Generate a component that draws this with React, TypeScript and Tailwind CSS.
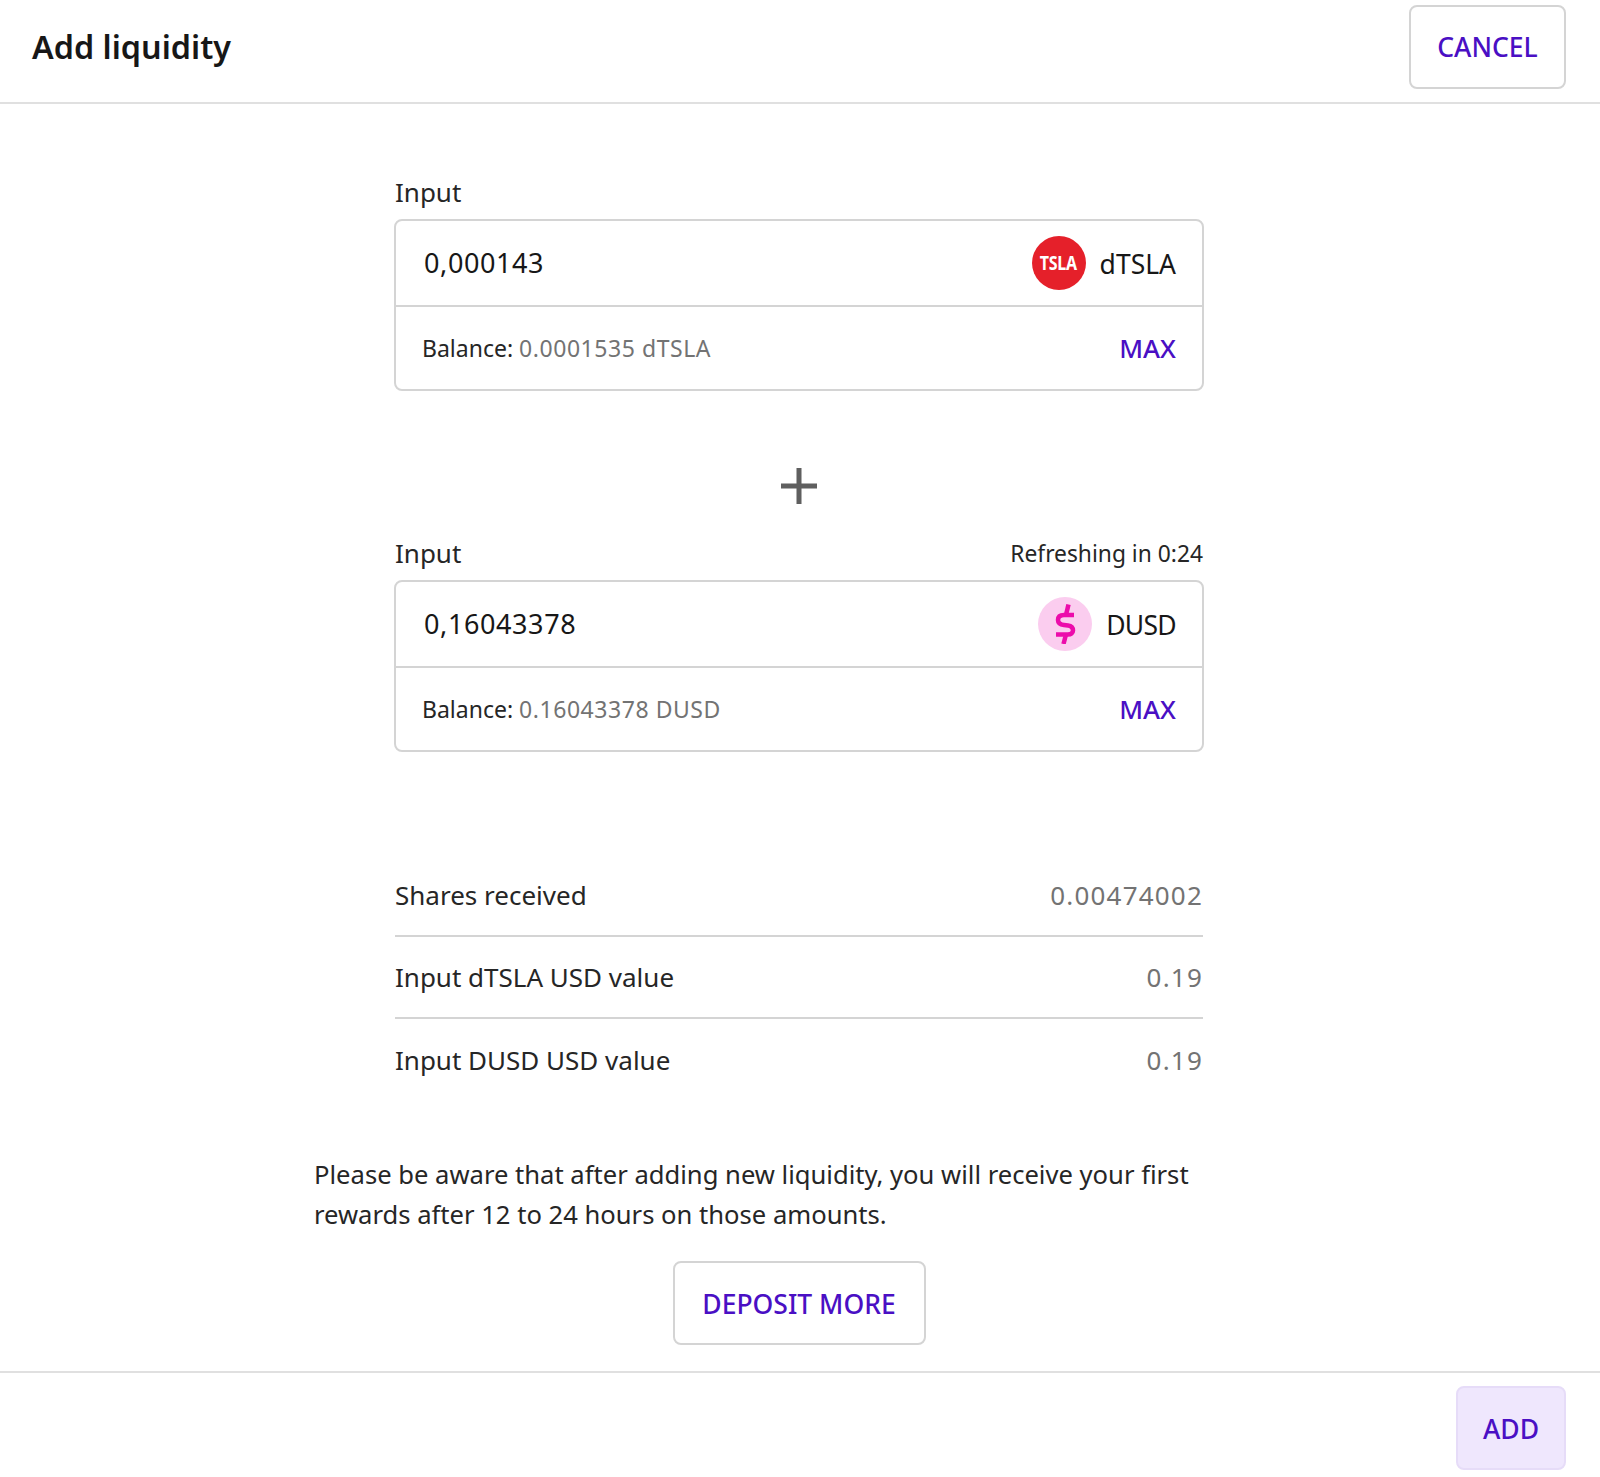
import React from "react";

function TokenCard({ amount, token, balance, icon }: { amount: string; token: string; balance: string; icon: React.ReactNode }) {
  return (
    <div className="border-2 border-[#d4d4d4] rounded-lg w-[810px] h-[172px] flex flex-col">
      <div className="h-[86px] flex items-center justify-between pl-[28px] pr-[26px] border-b-2 border-[#d4d4d4]">
        <span className="text-[27px] tracking-[0.6px] text-[#171717] pt-[1px]">{amount}</span>
        <div className="flex items-center gap-[14px]">
          {icon}
          <span className={"text-[26.5px] text-[#171717] pt-[3px] " + (token === "DUSD" ? "tracking-[-0.7px]" : "")}>{token}</span>
        </div>
      </div>
      <div className="flex-1 flex items-center justify-between pl-[26px] pr-[26px] pt-[1px]">
        <span className="text-[23px] text-[#262626]">
          Balance: <span className="text-[#737373] tracking-[0.55px]">{balance}</span>
        </span>
        <span className="text-[26px] font-medium text-[#4a0fc4]">MAX</span>
      </div>
    </div>
  );
}

function TslaIcon() {
  return (
    <div className="w-[54px] h-[54px] rounded-full bg-[#e5202a] flex items-center justify-center">
      <span className="text-white text-[20px] font-bold tracking-[-0.3px] scale-x-[0.8]">TSLA</span>
    </div>
  );
}

function DusdIcon() {
  return (
    <div className="w-[54px] h-[54px] rounded-full bg-[#fbcdef] flex items-center justify-center">
      <svg width="21" height="40" viewBox="0 0 21 40" fill="none" stroke="#ec0cab" strokeWidth="4.5" strokeLinejoin="round">
        <path d="M19 11 H9 C5 11 3 13 3 16 C3 19 5 20.5 9 21 L13 21.5 C16.5 22 18 24 18 26.5 C18 29 16 30.5 13 30.5 H1" />
        <path d="M13.5 0.5 L11 11" />
        <path d="M11 30.5 L8.5 40" />
      </svg>
    </div>
  );
}

function Row({ label, value, border }: { label: string; value: string; border?: boolean }) {
  return (
    <div className={"h-[82px] flex items-center justify-between text-[26px] " + (border ? "border-b-2 border-[#d4d4d4]" : "")}>
      <span className="text-[#262626]">{label}</span>
      <span className="text-[#737373] tracking-[1.2px]">{value}</span>
    </div>
  );
}

export default function App() {
  return (
    <div className="w-[1600px] h-[1477px] bg-white flex flex-col font-['Noto_Sans',sans-serif]">
      <header className="h-[104px] flex items-center justify-between pl-[32px] pr-[34px] pb-[9px] border-b-2 border-[#e0e0e0]">
        <h1 className="text-[32.3px] font-semibold text-[#171717]">Add liquidity</h1>
        <button className="w-[157px] h-[84px] pt-[3px] border-2 border-[#d4d4d4] rounded-lg text-[26.5px] font-medium text-[#4a0fc4]">CANCEL</button>
      </header>

      <main className="flex-1 flex flex-col items-center">
        <div className="w-[810px] mr-[2px] mt-[67px]">
          <div className="h-[48px] pb-[6px] flex items-center text-[26px] text-[#262626] pl-[1px]">Input</div>
          <TokenCard amount="0,000143" token="dTSLA" balance="0.0001535 dTSLA" icon={<TslaIcon />} />

          <div className="h-[144px] flex items-center justify-center pt-[46px]">
            <svg width="36" height="36" viewBox="0 0 36 36" fill="none" stroke="#5f5f5f" strokeWidth="5">
              <path d="M18 0 V36 M0 18 H36" />
            </svg>
          </div>

          <div className="h-[48px] pb-[6px] -mt-[3px] flex items-center justify-between text-[#262626] px-[1px]">
            <span className="text-[26px]">Input</span>
            <span className="text-[22.8px] pt-[2px]">Refreshing in 0:24</span>
          </div>
          <TokenCard amount="0,16043378" token="DUSD" balance="0.16043378 DUSD" icon={<DusdIcon />} />

          <div className="mt-[103px] px-[1px]">
            <Row label="Shares received" value="0.00474002" border />
            <Row label="Input dTSLA USD value" value="0.19" border />
            <Row label="Input DUSD USD value" value="0.19" />
          </div>
        </div>

        <p className="w-[970px] mr-[2px] mt-[54px] text-[25.6px] leading-[40px] text-[#262626]">
          Please be aware that after adding new liquidity, you will receive your first
          <br />
          rewards after 12 to 24 hours on those amounts.
        </p>

        <button className="mt-[26px] mr-[2px] w-[253px] h-[84px] pt-[3px] border-2 border-[#d4d4d4] rounded-lg text-[26.5px] font-medium text-[#4a0fc4]">DEPOSIT MORE</button>
      </main>

      <footer className="h-[106px] flex items-center justify-end pr-[34px] pt-[6px] border-t-2 border-[#e0e0e0]">
        <button className="w-[110px] h-[84px] pt-[3px] bg-[#efe7fd] border-2 border-[#e6dcf8] rounded-lg text-[26.5px] font-medium text-[#4a0fc4]">ADD</button>
      </footer>
    </div>
  );
}
